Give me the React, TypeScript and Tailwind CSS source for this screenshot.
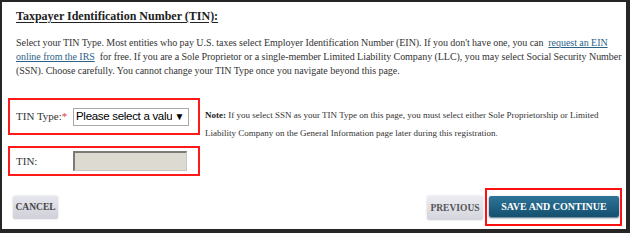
import React from 'react';

const serif = "font-['Liberation_Serif',serif]";

function Box({ children, className = '' }: { children: React.ReactNode; className?: string }) {
  return <div className={`border-2 border-[#ff1a1a] flex items-center ${className}`}>{children}</div>;
}

export default function App() {
  return (
    <div
      className={`relative h-[233px] w-[630px] overflow-hidden border-t-2 border-l-2 border-r-4 border-b-4 border-[#262626] bg-white text-[#333] ${serif}`}
    >
      <div className="pl-[14px] pt-[6px]">
        <h1 className={`text-[12px] font-bold leading-[17px] text-[#222] underline underline-offset-2 ${serif}`}>
          Taxpayer Identification Number (TIN):
        </h1>
        <p className={`mt-[11px] whitespace-nowrap text-[10px] leading-[14px] tracking-[-0.05px] ${serif}`}>
          Select your TIN Type. Most entities who pay U.S. taxes select Employer Identification Number (EIN). If you
          don't have one, you can&nbsp;{' '}
          <a className="text-[#2d6286] underline" href="#">
            request an EIN
          </a>
          <br />
          <a className="text-[#2d6286] underline" href="#">
            online from the IRS
          </a>
          &nbsp; for free. If you are a Sole Proprietor or a single-member Limited Liability Company (LLC), you may
          select Social Security Number
          <br />
          (SSN). Choose carefully. You cannot change your TIN Type once you navigate beyond this page.
        </p>
      </div>

      <div className="mt-[20px] flex pl-[6px]">
        <div className="flex w-[192px] flex-col gap-[11px]">
          <Box className="h-[37px] pl-[6px]">
            <span className="w-[57px] text-[11px]">
              TIN Type:<span className="text-[#e0383e]">*</span>
            </span>
            <div className="flex h-[18px] w-[116px] items-center border border-[#a9a9a9] bg-white pl-[2px] pr-[4px] font-['Liberation_Sans',Arial,sans-serif] text-[11.5px] leading-none tracking-[-0.3px] text-black">
              <span className="min-w-0 flex-1 overflow-hidden whitespace-nowrap">Please select a valu</span>
              <span className="ml-[2px] text-[10px]">▼</span>
            </div>
          </Box>
          <Box className="h-[30px] pl-[6px]">
            <span className="w-[57px] text-[11px]">TIN:</span>
            <div className="h-[20px] w-[114px] border border-t-2 border-l-2 border-t-[#7a7a76] border-l-[#7a7a76] border-r-[#c9c8c0] border-b-[#c9c8c0] bg-[#dddbd1]" />
          </Box>
        </div>
        <div className="ml-[5px] pt-[8px] whitespace-nowrap text-[9px] leading-[18px]">
          <b className="text-[#222]">Note:</b> If you select SSN as your TIN Type on this page, you must select either
          Sole Proprietorship or Limited
          <br />
          Liability Company on the General Information page later during this registration.
        </div>
      </div>

      <div className="mt-[12px] flex items-center justify-between">
        <button className="ml-[11px] h-[23px] w-[45px] rounded-[2px] bg-gradient-to-b from-[#e6e6ee] to-[#cfd0d8] text-[9.5px] font-bold text-[#444] shadow-[0_0_2px_#c8c8d0]">
          CANCEL
        </button>
        <div className="flex items-center">
          <button className="mr-[2px] mt-[2px] h-[24px] w-[56px] rounded-[2px] bg-gradient-to-b from-[#ececf2] to-[#d4d4dc] text-[9.5px] font-bold text-[#555] shadow-[0_0_2px_#c8c8d0]">
            PREVIOUS
          </button>
          <div className="mr-[4px] flex h-[38px] w-[137px] items-start border-2 border-[#ff1010] pl-[2px] pt-[6px]">
            <button className="h-[21px] w-[130px] rounded-[2px] bg-gradient-to-b from-[#2e7498] to-[#15506f] text-[10px] font-bold text-white shadow-[0_1px_2px_#4a6a80]">
              SAVE AND CONTINUE
            </button>
          </div>
        </div>
      </div>
    </div>
  );
}
